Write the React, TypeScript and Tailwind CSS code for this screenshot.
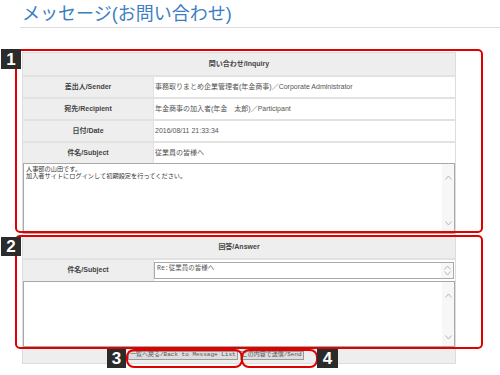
import React from "react";

const font = "font-['Liberation_Sans','Noto_Sans_CJK_JP',sans-serif]";

const inquiryRows = [
  ["差出人/Sender", "事務取りまとめ企業管理者(年金商事)／Corporate Administrator"],
  ["宛先/Recipient", "年金商事の加入者(年金　太郎)／Participant"],
  ["日付/Date", "2016/08/11 21:33:34"],
  ["件名/Subject", "従業員の皆様へ"],
];

const ScrollArrows = ({ top, bottom }: { top: string; bottom: string }) => (
  <div className="absolute right-0 top-0 bottom-0 w-[12px] bg-[#f7f7f7]">
    <svg className={`absolute left-[3px] ${top}`} width="7" height="5" viewBox="0 0 7 5">
      <path d="M0.5 4.5 L3.5 1 L6.5 4.5" fill="none" stroke="#b5b5b5" strokeWidth="1" />
    </svg>
    <svg className={`absolute left-[3px] ${bottom}`} width="7" height="5" viewBox="0 0 7 5">
      <path d="M0.5 0.5 L3.5 4 L6.5 0.5" fill="none" stroke="#b5b5b5" strokeWidth="1" />
    </svg>
  </div>
);

const Badge = ({ n, cls }: { n: string; cls: string }) => (
  <div className={`absolute ${cls} bg-[#2b2b2b] text-white font-bold text-[17px] leading-none flex items-center justify-center ${font}`}>
    {n}
  </div>
);

export default function App() {
  return (
    <div className={`relative w-[500px] h-[375px] overflow-hidden bg-white ${font}`}>
      <div className="ml-[20px] pt-[4px] border-b border-[#dddddd] h-[28px]">
        <h1 className="pl-[2px] text-[18px] leading-[21px] text-[#3c7ec2]">メッセージ(お問い合わせ)</h1>
      </div>

      <div className="ml-[22px] mt-[24px] w-[434px] border border-[#dddddd] text-[7px] text-[#444444]">
        <div className="h-[22px] bg-[#eeeeee] flex items-center justify-center font-bold">問い合わせ/Inquiry</div>
        {inquiryRows.map(([label, value]) => (
          <div key={label} className="grid grid-cols-[130px_1fr] h-[22px] border-t-2 border-[#e2e2e2]">
            <div className="bg-[#eeeeee] flex items-center justify-center font-bold">{label}</div>
            <div className="bg-white flex items-center pl-[1px] border-l border-[#e2e2e2] text-[#555555]">{value}</div>
          </div>
        ))}
        <div className="relative h-[71px] border border-[#a9a9a9] bg-white px-[2px] pt-[1px] text-[6.2px] leading-[7px] text-[#333333]">
          <div>人事部の山田です。</div>
          <div>加入者サイトにログインして初期設定を行ってください。</div>
          <ScrollArrows top="top-[11px]" bottom="bottom-[7px]" />
        </div>

        <div className="mt-[2px] h-[22px] bg-[#eeeeee] flex items-center justify-center font-bold">回答/Answer</div>
        <div className="grid grid-cols-[130px_1fr] h-[23px] border-t-2 border-[#e2e2e2]">
          <div className="bg-[#eeeeee] flex items-center justify-center font-bold">件名/Subject</div>
          <div className="bg-white border-l border-[#e2e2e2] py-[2px] pr-[1px]">
            <div className="relative h-full border border-[#a9a9a9] pl-[2px] pt-[1px] font-['Liberation_Mono','Noto_Sans_CJK_JP',monospace] text-[6.5px] text-[#555555]">
              Re:従業員の皆様へ
              <ScrollArrows top="top-[2px]" bottom="bottom-[2px]" />
            </div>
          </div>
        </div>
        <div className="relative h-[66px] border border-[#a9a9a9] bg-white">
          <ScrollArrows top="top-[11px]" bottom="bottom-[6px]" />
        </div>
        <div className="h-[16px] bg-[#eeeeee] flex items-center pl-[105px] gap-[2px] font-['Liberation_Mono','Noto_Sans_CJK_JP',monospace] text-[6px] text-[#555555]">
          <button className="h-[9px] px-[1px] leading-none bg-[#dddddd] border border-[#999999]">一覧へ戻る/Back to Message List</button>
          <button className="h-[9px] px-[1px] leading-none bg-[#dddddd] border border-[#999999]">この内容で送信/Send</button>
        </div>
      </div>

      {/* annotations */}
      <div className="absolute left-[15px] top-[49px] w-[468px] h-[184px] border-2 border-[#e00000] rounded-[5px]" />
      <div className="absolute left-[15px] top-[235px] w-[468px] h-[114px] border-2 border-[#e00000] rounded-[5px]" />
      <div className="absolute left-[126px] top-[349px] w-[117px] h-[19px] border-2 border-[#e00000] rounded-[8px]" />
      <div className="absolute left-[241px] top-[349px] w-[77px] h-[19px] border-2 border-[#e00000] rounded-[8px]" />
      <Badge n="1" cls="left-[1px] top-[49px] w-[20px] h-[20px]" />
      <Badge n="2" cls="left-[1px] top-[237px] w-[20px] h-[19px]" />
      <Badge n="3" cls="left-[107px] top-[349px] w-[19px] h-[19px]" />
      <Badge n="4" cls="left-[317px] top-[349px] w-[21px] h-[19px]" />
    </div>
  );
}
